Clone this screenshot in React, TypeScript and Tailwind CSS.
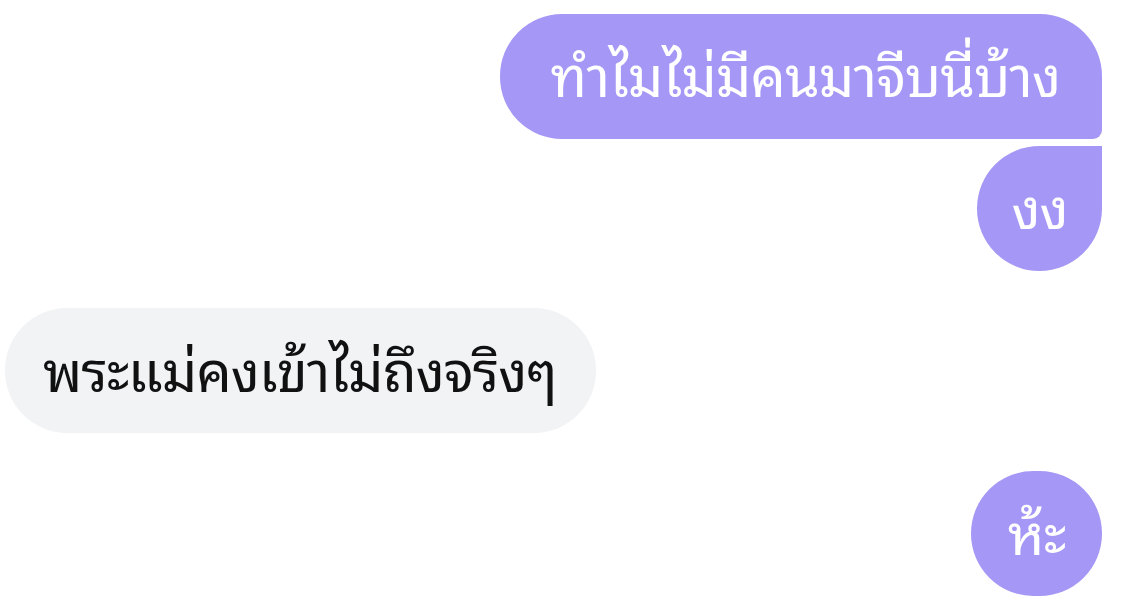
const font = { fontFamily: '"Noto Sans Thai Looped", "Noto Sans Thai", sans-serif' };

export default function App() {
  return (
    <div className="w-[1127px] h-[615px] bg-white overflow-hidden pt-[14px]" style={font}>
      <div className="flex flex-col items-end pr-[25px] gap-[7px]">
        <div className="h-[125px] flex items-center pb-[10px] pl-[50px] pr-[42px] bg-[#a597f6] text-white text-[56px] leading-none tracking-[-1px] rounded-[62px] rounded-br-[9px]">
          ทำไมไม่มีคนมาจีบนี่บ้าง
        </div>
        <div className="h-[125px] w-[125px] flex items-center justify-center pb-[10px] bg-[#a597f6] text-white text-[56px] leading-none tracking-[-1px] rounded-full rounded-tr-[9px]">
          งง
        </div>
      </div>
      <div className="flex pl-[5px] mt-[37px]">
        <div className="h-[125px] flex items-center pb-[8px] pl-[38px] pr-[40px] bg-[#f2f3f5] text-[#111111] text-[56px] leading-none tracking-[-1px] rounded-[62px]">
          พระแม่คงเข้าไม่ถึงจริงๆ
        </div>
      </div>
      <div className="flex justify-end pr-[25px] mt-[38px]">
        <div className="h-[125px] w-[131px] flex items-center justify-center pb-[8px] bg-[#a597f6] text-white text-[56px] leading-none tracking-[-1px] rounded-full">
          ห้ะ
        </div>
      </div>
    </div>
  );
}
